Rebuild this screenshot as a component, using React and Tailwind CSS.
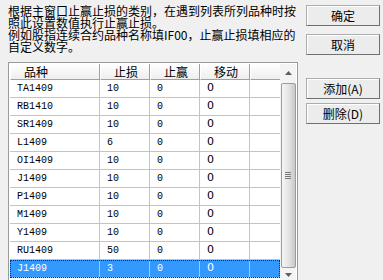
import React from "react";

const rows = [
  ["TA1409", "10", "0", "0"],
  ["RB1410", "10", "0", "0"],
  ["SR1409", "10", "0", "0"],
  ["L1409", "6", "0", "0"],
  ["OI1409", "10", "0", "0"],
  ["J1409", "10", "0", "0"],
  ["P1409", "10", "0", "0"],
  ["M1409", "10", "0", "0"],
  ["Y1409", "10", "0", "0"],
  ["RU1409", "50", "0", "0"],
  ["J1409", "3", "0", "0"],
];

const cjk = { fontFamily: "'Noto Sans CJK SC', sans-serif" };

const Btn = ({ children, className = "" }) => (
  <button
    className={`w-[74px] h-[21px] bg-[#ececec] border border-[#adadad] border-r-[#707070] border-b-[#707070] shadow-[inset_1px_1px_0_#ffffff] text-[12px] leading-none text-black ${className}`}
    style={cjk}
  >
    {children}
  </button>
);

const HeadCell = ({ w, children }) => (
  <div
    className={`${w} h-full flex items-center pl-[13px] text-[12px] leading-none bg-gradient-to-b from-white to-[#eeeeee] border-r border-b border-[#a0a0a0] border-l border-l-white`}
    style={cjk}
  >
    {children}
  </div>
);

const Row = ({ r, selected }) => {
  const line = selected ? "border-[#9cc8ff]" : "border-[#c4c4c4]";
  const cell = `h-full flex items-center pl-[7px] border-r ${line}`;
  return (
    <div
      className={`flex h-[18px] border-b ${line} ${
        selected ? "bg-[#3399ff] text-white outline outline-1 outline-dotted outline-[#1a2a4a] -outline-offset-1" : "text-black"
      }`}
    >
      <div className={`w-[90px] ${cell} text-[10px]`} style={{ fontFamily: "'Liberation Mono', monospace" }}>
        {r[0]}
      </div>
      <div className={`w-[50px] ${cell} text-[10px]`} style={{ fontFamily: "'Liberation Mono', monospace" }}>
        {r[1]}
      </div>
      <div className={`w-[50px] ${cell} text-[10px]`} style={{ fontFamily: "'Liberation Mono', monospace" }}>
        {r[2]}
      </div>
      <div className={`w-[50px] ${cell} text-[11px]`} style={{ fontFamily: "'DejaVu Sans', sans-serif" }}>
        {r[3]}
      </div>
      <div className="flex-1 h-full" />
    </div>
  );
};

export default function App() {
  return (
    <div className="w-[383px] h-[280px] bg-[#f0f0f0] overflow-hidden flex text-black">
      <div className="ml-[8px] w-[290px] pt-[5px] flex flex-col">
        <p className="text-[12px] leading-[12px] whitespace-nowrap h-[48px]" style={cjk}>
          根据主窗口止赢止损的类别，在遇到列表所列品种时按
          <br />
          照此设置数值执行止赢止损。
          <br />
          例如股指连续合约品种名称填IF00，止赢止损填相应的
          <br />
          自定义数字。
        </p>
        <div className="mt-[9px] w-[290px] h-[240px] border border-[#9a9a9a] p-[1px] bg-white flex">
          <div className="w-[270px] flex flex-col">
            <div className="flex h-[16px]">
              <HeadCell w="w-[90px]">品种</HeadCell>
              <HeadCell w="w-[50px]">止损</HeadCell>
              <HeadCell w="w-[50px]">止赢</HeadCell>
              <HeadCell w="w-[50px]">移动</HeadCell>
              <div className="flex-1 h-full bg-gradient-to-b from-white to-[#eeeeee] border-b border-[#a0a0a0] border-l border-l-white" />
            </div>
            {rows.map((r, i) => (
              <Row key={i} r={r} selected={i === rows.length - 1} />
            ))}
            <Row r={["", "", "", ""]} />
          </div>
          <div className="w-[16px] bg-[#f4f4f4] flex flex-col items-center">
            <div className="h-[18px] flex items-center justify-center">
              <svg width="7" height="4" viewBox="0 0 7 4">
                <path d="M0 4 L3.5 0 L7 4 Z" fill="#606060" />
              </svg>
            </div>
            <div className="w-[15px] h-[185px] mt-[1px] rounded-[2px] border border-[#9c9c9c] bg-gradient-to-r from-[#f6f6f6] via-[#e4e4e4] to-[#c9c9c9] flex items-center justify-center">
              <div className="flex flex-col gap-[1px]">
                <div className="w-[6px] h-[1px] bg-[#7a7a7a]" />
                <div className="w-[6px] h-[1px] bg-[#7a7a7a]" />
                <div className="w-[6px] h-[1px] bg-[#7a7a7a]" />
                <div className="w-[6px] h-[1px] bg-[#7a7a7a]" />
              </div>
            </div>
            <div className="h-[14px] flex items-center justify-center">
              <svg width="7" height="4" viewBox="0 0 7 4">
                <path d="M0 0 L3.5 4 L7 0 Z" fill="#606060" />
              </svg>
            </div>
          </div>
        </div>
      </div>
      <div className="ml-[8px] pt-[5px] flex flex-col">
        <Btn>确定</Btn>
        <Btn className="mt-[8px]">取消</Btn>
        <Btn className="mt-[23px]">添加(A)</Btn>
        <Btn className="mt-[4px]">删除(D)</Btn>
      </div>
    </div>
  );
}
